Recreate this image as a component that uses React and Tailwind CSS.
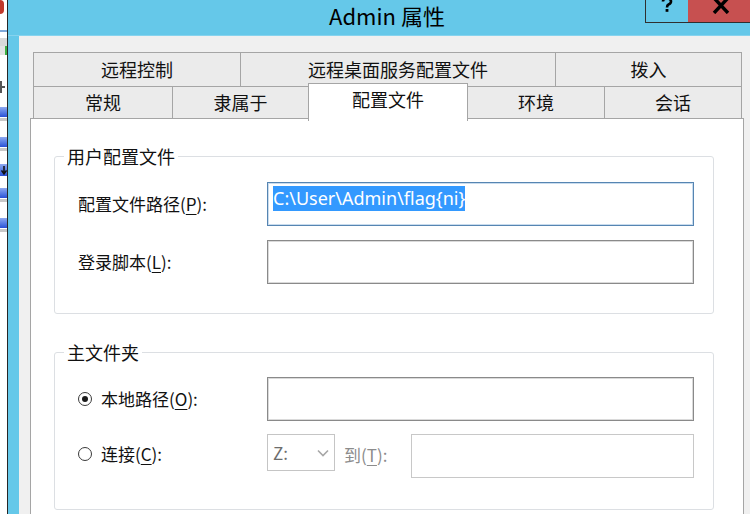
import React from "react";

const font = "font-['Noto_Sans_CJK_SC','Noto_Sans',sans-serif]";

const LeftStrip = () => (
    <div className="w-[7px] h-full bg-white flex flex-col overflow-hidden">
        <div className="h-[14px] w-[4px] rounded-r-full bg-[#c0392b] mt-0" />
        <div className="h-[16px]" />
        <div className="h-[2px] bg-[#7fa8d8]" />
        <div className="h-[8px] bg-[#d9d9d9] mt-[6px]" />
        <div className="h-[9px] flex">
            <div className="w-[5px] bg-[#e3e3e3]" />
            <div className="w-[2px] bg-[#3cb043]" />
        </div>
        <div className="h-[25px]" />
        <div className="h-[14px] w-[6px] flex overflow-hidden">
            <div className="w-[2px] h-[12px] bg-[#555] mt-[1px]" />
            <div className="w-[3px] h-[2px] bg-[#555] mt-[6px]" />
        </div>
        <div className="h-[13px]" />
        <div className="h-[10px] bg-gradient-to-b from-[#8fa9f0] to-[#2a4fd6]" />
        <div className="h-[3px] bg-[#c8c8c8] mt-[1px]" />
        <div className="h-[16px]" />
        <div className="h-[10px] bg-gradient-to-b from-[#8fa9f0] to-[#2a4fd6]" />
        <div className="h-[3px] bg-[#c8c8c8] mt-[1px]" />
        <div className="h-[13px]" />
        <div className="h-[12px] bg-gradient-to-b from-[#8fa9f0] to-[#2a4fd6] flex justify-end">
            <svg width="6" height="12" viewBox="0 0 6 12">
                <path d="M3 2 V9 M0.5 6.5 L3 10 L5.5 6.5" fill="none" stroke="#111" strokeWidth="1.5" />
            </svg>
        </div>
        <div className="h-[12px]" />
        <div className="h-[10px] bg-gradient-to-b from-[#8fa9f0] to-[#2a4fd6]" />
        <div className="h-[3px] bg-[#c8c8c8] mt-[1px]" />
        <div className="h-[16px]" />
        <div className="h-[10px] bg-gradient-to-b from-[#8fa9f0] to-[#2a4fd6]" />
        <div className="h-[3px] bg-[#c8c8c8] mt-[1px]" />
    </div>
);

const TitleBar = () => (
    <div className="h-[36px] flex items-start border-b border-[#86d3ee]">
        <div className={`flex-1 pl-[121px] text-center text-[22px] leading-[30px] text-black ${font}`}>
            Admin 属性
        </div>
        <div className="w-[43px] h-[23px] border-l border-b border-[#2f2f2f] flex justify-center items-start">
            <svg width="12" height="16" viewBox="0 0 12 16" className="mt-[-2px]">
                <path d="M2 3.5 Q2 0.5 6 0.5 Q10 0.5 10 3.5 Q10 5.5 7.5 6.5 Q6 7.2 6 9.5" fill="none" stroke="#000" strokeWidth="2.6" />
                <rect x="4.6" y="11" width="2.8" height="2.8" fill="#000" />
            </svg>
        </div>
        <div className="w-[62px] h-[23px] bg-[#c75050] border-b border-[#2f2f2f] flex justify-center items-start">
            <svg width="20" height="14" viewBox="0 0 20 14" className="ml-[4px]">
                <path d="M3 -2 L17 13 M17 -2 L3 13" stroke="#000" strokeWidth="3.4" />
            </svg>
        </div>
    </div>
);

const tabsTop = [
    { label: "远程控制", w: "w-[207px]" },
    { label: "远程桌面服务配置文件", w: "w-[315px]" },
    { label: "拨入", w: "w-[187px]" },
];

const tabsBottom = [
    { label: "常规", w: "w-[139px]" },
    { label: "隶属于", w: "w-[136px]" },
    { label: "配置文件", w: "w-[160px]", active: true },
    { label: "环境", w: "w-[136px]" },
    { label: "会话", w: "w-[138px]" },
];

const Mn = ({ children }) => <span className="underline underline-offset-[3px] decoration-1">{children}</span>;

const Radio = ({ checked }) => (
    <span className="w-[14px] h-[14px] rounded-full border border-[#3a3a3a] bg-white flex items-center justify-center mr-[9px]">
        {checked && <span className="w-[6px] h-[6px] rounded-full bg-[#1a1a1a]" />}
    </span>
);

const Box = ({ className = "", children }) => (
    <div className={`w-[427px] h-[44px] bg-white ${className}`}>{children}</div>
);

const App = () => {
    return (
        <div className={`w-[750px] h-[514px] overflow-hidden flex bg-white ${font}`}>
            <LeftStrip />
            <div className="flex-1 min-w-0 flex flex-col border-l border-[#262626] bg-[#65c8e9]">
                <TitleBar />
                <div className="flex-1 ml-[11px] bg-[#f0f0f0] pt-[16px] pl-[11px] flex flex-col">
                    <div className="ml-[3px] flex h-[34px]">
                        {tabsTop.map((t, i) => (
                            <div
                                key={t.label}
                                className={`${t.w} h-full bg-[#ebebeb] border-t border-l border-[#a5a5a5] ${i === tabsTop.length - 1 ? "border-r" : ""} flex items-center justify-center text-[18px] text-[#111]`}
                            >
                                {t.label}
                            </div>
                        ))}
                    </div>
                    <div className="ml-[3px] flex h-[32px] items-start">
                        {tabsBottom.map((t, i) =>
                            t.active ? (
                                <div
                                    key={t.label}
                                    className={`${t.w} h-[38px] -mt-[3px] relative z-10 bg-white border-t border-l border-r border-[#a5a5a5] flex items-start justify-center pt-[2px] text-[18px] text-[#111]`}
                                >
                                    {t.label}
                                </div>
                            ) : (
                                <div
                                    key={t.label}
                                    className={`${t.w} h-full bg-[#ebebeb] border-t border-[#a5a5a5] ${tabsBottom[i - 1]?.active ? "" : "border-l"} ${i === tabsBottom.length - 1 ? "border-r" : ""} flex items-center justify-center text-[18px] text-[#111]`}
                                >
                                    {t.label}
                                </div>
                            )
                        )}
                    </div>
                    <div className="w-[714px] flex-1 bg-white border-t border-l border-r border-[#a5a5a5] pl-[23px] pt-[27px]">
                        <fieldset className="w-[660px] border border-[#dcdfe3] rounded-[3px] pl-[23px] pt-[16px] pb-[29px]">
                            <legend className="-ml-[14px] px-[3px] text-[18px] leading-[20px] text-[#111]">用户配置文件</legend>
                            <div className="flex items-center">
                                <div className="w-[189px] text-[17px] text-[#111]">配置文件路径(<Mn>P</Mn>):</div>
                                <Box className="border border-[#5685b2] shadow-[inset_0_0_0_1px_#c9dcee] pl-[5px] pt-[3px]">
                                    <span className="bg-[#3399ff] text-white text-[18px] leading-[25px] inline-block font-['Noto_Sans',sans-serif]">
                                        C:\User\Admin\flag{"{"}ni{"}"}
                                    </span>
                                </Box>
                            </div>
                            <div className="flex items-center mt-[14px]">
                                <div className="w-[189px] text-[17px] text-[#111]">登录脚本(<Mn>L</Mn>):</div>
                                <Box className="border border-[#8a8a8a] shadow-[inset_0_0_0_1px_#dadada]" />
                            </div>
                        </fieldset>
                        <fieldset className="w-[660px] mt-[28px] border border-[#dcdfe3] rounded-[3px] pl-[23px] pt-[15px] pb-[31px]">
                            <legend className="-ml-[14px] px-[3px] text-[18px] leading-[20px] text-[#111]">主文件夹</legend>
                            <div className="flex items-center">
                                <div className="w-[189px] flex items-center text-[17px] text-[#111]">
                                    <Radio checked />
                                    本地路径(<Mn>O</Mn>):
                                </div>
                                <Box className="border border-[#8a8a8a] shadow-[inset_0_0_0_1px_#dadada]" />
                            </div>
                            <div className="flex items-start mt-[13px]">
                                <div className="w-[189px] h-[44px] -mt-[2px] flex items-center text-[17px] text-[#111]">
                                    <Radio />
                                    连接(<Mn>C</Mn>):
                                </div>
                                <div className="w-[68px] h-[37px] border border-[#c5c5c5] bg-white flex items-center justify-between pl-[5px] pr-[5px] text-[17px] text-[#6d6d6d]">
                                    <span>Z:</span>
                                    <svg width="12" height="8" viewBox="0 0 12 8">
                                        <path d="M1 1.5 L6 6.5 L11 1.5" fill="none" stroke="#a7a7a7" strokeWidth="1.6" />
                                    </svg>
                                </div>
                                <div className="w-[76px] h-[42px] pl-[9px] flex items-center text-[17px] text-[#8c8c8c]">
                                    到(<Mn>T</Mn>):
                                </div>
                                <div className="w-[283px] h-[44px] bg-white border border-[#c8c8c8]" />
                            </div>
                        </fieldset>
                    </div>
                </div>
            </div>
        </div>
    );
};

export default App;
